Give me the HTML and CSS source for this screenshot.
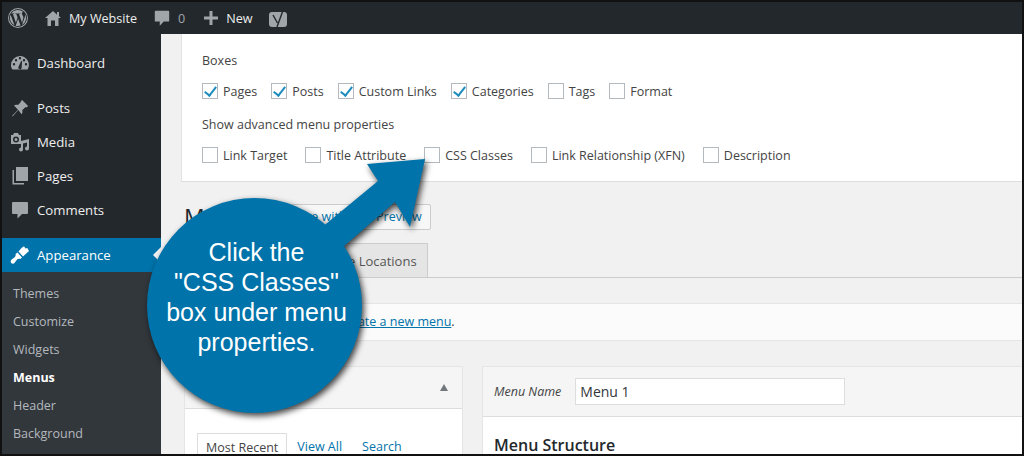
FILE: index.html
```html
<!DOCTYPE html>
<html lang="en">
<head>
<meta charset="utf-8">
<title>Menus</title>
<link rel="stylesheet" href="styles.css">
</head>
<body>
<div class="frame">
  <header class="adminbar">
    <svg class="ab-wp" viewBox="0 0 20 20"><path fill-rule="evenodd" d="M10 0a10 10 0 1 0 0 20 10 10 0 0 0 0-20zm0 1a9 9 0 1 1 0 18 9 9 0 0 1 0-18z"/><path d="M1.9 10c0 3.2 1.9 6 4.6 7.3L2.600 6.700A8 8 0 0 0 1.900 10zm13.500-.4c0-1-.4-1.700-.7-2.200-.4-.7-.8-1.200-.8-1.900 0-.7.6-1.400 1.400-1.400h.1A8.100 8.100 0 0 0 3.200 5.600h.5c.9 0 2.200-.1 2.200-.1.400 0 .5.600 0 .6 0 0-.4.100-.9.100l2.900 8.600L9.600 9.600 8.400 6.200c-.4 0-.8-.1-.8-.1-.4 0-.4-.7.100-.6 0 0 1.300.1 2.100.1.900 0 2.200-.1 2.200-.1.400 0 .5.600 0 .6 0 0-.4.100-.9.100l2.900 8.500.8-2.600c.3-1.100.6-1.900.6-2.500zM10.100 10.700l-2.400 7a8.100 8.100 0 0 0 5-.1l-.1-.1-2.500-6.800zm6.900-4.600c0 .3.100.6.100.9 0 .8-.2 1.700-.6 2.900l-2.500 7.100A8.100 8.100 0 0 0 17 6.100z"/></svg>
    <svg class="ab-home" viewBox="0 0 20 20"><path d="M16 8.500 10 3 2 10h2.500v8H8v-5.500h4V18h3.500v-8H18l-2-1.800V4h-2v2.700z"/></svg>
    <span class="ab-site">My Website</span>
    <svg class="ab-bubble" viewBox="0 0 20 20"><path d="M3 2h14a1 1 0 0 1 1 1v10a1 1 0 0 1-1 1h-5l-4.500 4.500V14H3a1 1 0 0 1-1-1V3a1 1 0 0 1 1-1z"/></svg>
    <span class="ab-count">0</span>
    <svg class="ab-plus" viewBox="0 0 14 14"><path d="M5.500 0h3v5.500H14v3H8.500V14h-3V8.500H0v-3h5.500z"/></svg>
    <span class="ab-new">New</span>
    <svg class="ab-yoast" viewBox="0 0 18 18"><rect x="0" y="3" width="18" height="15" rx="3"/><path class="ab-yoast-cut" d="M4 6l4.500 8M14.500 0 8 18"/></svg>
  </header>
  <div class="body">
    <nav class="sidebar">
      <ul class="menu">
        <li class="item gap-after"><svg class="mi" viewBox="0 0 20 20"><path fill-rule="evenodd" d="M10 3a9 9 0 0 0-9 9c0 1.800.5 3.300 1.400 4.600h15.200A9 9 0 0 0 10 3zM4 12.500a1.200 1.200 0 1 1 0-2.400 1.200 1.200 0 0 1 0 2.400zm2-4a1.200 1.200 0 1 1 0-2.400 1.200 1.200 0 0 1 0 2.400zM10 6.500a1.200 1.200 0 1 1 0-2.400 1.200 1.200 0 0 1 0 2.400zm1.600 8.700a1.700 1.700 0 0 1-3.200-1.100l2.800-6.100.9.100zM14 8.500a1.200 1.200 0 1 1 0-2.400 1.200 1.200 0 0 1 0 2.400zm2 4a1.200 1.200 0 1 1 0-2.400 1.200 1.200 0 0 1 0 2.400z"/></svg><span>Dashboard</span></li>
        <li class="item"><svg class="mi" viewBox="0 0 20 20"><path d="M10.400 3.400 12.100 2l6 6-1.500 1.500-1-.6-3.400 3.300c.5 1.500.3 3-.6 4L8.300 12 3 18l-1 .4.400-1L8 11.700 4 7.500c1-.9 2.500-1.100 4-.6l3.300-3.400z"/></svg><span>Posts</span></li>
        <li class="item"><svg class="mi" viewBox="0 0 20 20"><path fill-rule="evenodd" d="M1 3h2l1-2h4l1 2h2v9H1zm5 1.500A3 3 0 1 0 6 10.500a3 3 0 0 0 0-6zm0 1.500a1.500 1.500 0 1 1 0 3 1.500 1.500 0 0 1 0-3z"/><path d="M19 7v9.500a2 2 0 1 1-2-2v-4l-4 1v6a2 2 0 1 1-2-2v-6.500z"/></svg><span>Media</span></li>
        <li class="item"><svg class="mi" viewBox="0 0 20 20"><path d="M6 1h12v14H6z"/><path d="M4 4v13h10v1.500H2.500V4z"/></svg><span>Pages</span></li>
        <li class="item gap-after"><svg class="mi" viewBox="0 0 20 20"><path d="M3 2h14a1 1 0 0 1 1 1v10a1 1 0 0 1-1 1h-5l-4.500 4.500V14H3a1 1 0 0 1-1-1V3a1 1 0 0 1 1-1z"/></svg><span>Comments</span></li>
        <li class="item current"><svg class="mi" viewBox="0 0 20 20"><path d="M11.500 3 14 1.200l1.500 2.300L17.300 3l1.700 3-6 5.500-4.500-5zM7.500 7.500l4.500 5-1.700 1.500c-1.300-.6-2.500-.3-3.200.6L4.500 18c-.8.900-2.500.8-3.300-.1-.8-.9-.6-2.400.2-3.100l3.500-2.900c.8-.7 1-1.700.6-3z"/></svg><span>Appearance</span></li>
      </ul>
      <ul class="submenu">
        <li>Themes</li>
        <li>Customize</li>
        <li>Widgets</li>
        <li class="active">Menus</li>
        <li>Header</li>
        <li>Background</li>
      </ul>
    </nav>
    <main class="content">
      <section class="options">
        <p class="legend">Boxes</p>
        <div class="checks">
          <label class="check"><i class="box on"></i>Pages</label>
          <label class="check"><i class="box on"></i>Posts</label>
          <label class="check"><i class="box on"></i>Custom Links</label>
          <label class="check"><i class="box on"></i>Categories</label>
          <label class="check"><i class="box"></i>Tags</label>
          <label class="check"><i class="box"></i>Format</label>
        </div>
        <p class="legend strong">Show advanced menu properties</p>
        <div class="checks wide">
          <label class="check"><i class="box"></i>Link Target</label>
          <label class="check"><i class="box"></i>Title Attribute</label>
          <label class="check"><i class="box"></i>CSS Classes</label>
          <label class="check"><i class="box"></i>Link Relationship (XFN)</label>
          <label class="check"><i class="box"></i>Description</label>
        </div>
      </section>
      <div class="wrap">
        <div class="heading">
          <h1>Menus</h1>
          <a class="button">Manage with Live Preview</a>
        </div>
        <div class="tabs">
          <a class="tab">Edit Menus</a>
          <a class="tab second">Manage Locations</a>
        </div>
        <div class="notice">Edit your menu below, or <a>create a new menu</a>.</div>
        <div class="columns">
          <section class="left">
            <div class="left-head"><span>Pages</span><i class="caret"></i></div>
            <div class="left-body">
              <span class="subtab on">Most Recent</span>
              <span class="subtab">View All</span>
              <span class="subtab">Search</span>
            </div>
          </section>
          <section class="right">
            <div class="right-head"><em>Menu Name</em><span class="input">Menu 1</span></div>
            <div class="right-body"><h3>Menu Structure</h3></div>
          </section>
        </div>
      </div>
    </main>
  </div>
  <div class="callout">
    <svg class="callout-shape" viewBox="0 0 300 240" aria-hidden="true">
      <g class="shape">
        <circle cx="109.500" cy="132.500" r="107.500"/>
        <path d="M280 -14 L222 -9 L233 8 L170 60 L198 74 L250 29 L265 54z"/>
      </g>
    </svg>
    <p class="callout-text">Click the<br>"CSS Classes"<br>box under menu<br>properties.</p>
  </div>
</div>
</body>
</html>
```
FILE: styles.css
```css
* { box-sizing: border-box; }
html, body { margin: 0; padding: 0; }
body { width: 1024px; height: 456px; overflow: hidden; font-family: "Open Sans", "Liberation Sans", sans-serif; font-size: 12.500px; color: #444; background: #000; }
ul { list-style: none; margin: 0; padding: 0; }
p, h1, h3 { margin: 0; }
.frame { position: relative; width: 1024px; height: 456px; border: 2px solid #111; display: flex; flex-direction: column; overflow: hidden; background: #f1f1f1; }
.adminbar { flex: none; height: 32px; background: #23282d; color: #eee; display: flex; align-items: center; font-size: 12.600px; }
.adminbar svg { fill: #a0a5aa; flex: none; }
.ab-wp { width: 20px; height: 20px; margin-left: 6px; }
.ab-home { width: 20px; height: 20px; margin-left: 15px; }
.ab-site { margin-left: 6px; }
.ab-bubble { width: 18px; height: 18px; margin-left: 16px; }
.ab-count { margin-left: 7px; color: #a0a5aa; }
.ab-plus { width: 14px; height: 14px; margin-left: 19px; }
.ab-new { margin-left: 8px; }
.ab-yoast { width: 18px; height: 18px; margin-left: 16px; }
.ab-yoast-cut { fill: none; stroke: #23282d; stroke-width: 1.400; }
.body { flex: 1; display: flex; min-height: 0; }
.sidebar { flex: none; width: 159px; background: #23282d; padding-top: 12px; }
.item { height: 34px; display: flex; align-items: center; padding-left: 8px; font-size: 13.200px; color: #eee; }
.item span { margin-top: -1px; }
.item .mi { width: 20px; height: 20px; fill: #a0a5aa; margin-right: 7px; flex: none; }
.gap-after { margin-bottom: 11px; }
.current { position: relative; background: #0073aa; color: #fff; }
.current .mi { fill: #fff; }
.current::after { content: ""; position: absolute; right: 0; top: 9px; border: 8px solid transparent; border-right-color: #f1f1f1; }
.submenu { background: #32373c; padding: 8px 0 6px; font-size: 12.500px; color: #b4b9be; }
.submenu li { height: 28px; line-height: 28px; padding-left: 11px; }
.submenu .active { color: #fff; font-weight: 700; }
.content { flex: 1; min-width: 0; overflow: hidden; }
.options { margin-left: 20px; height: 148px; background: #fff; border-left: 1px solid #e2e2e2; border-bottom: 1px solid #ddd; padding-left: 20px; }
.legend { line-height: 20px; padding-top: 17px; height: 36px; }
.legend.strong { font-weight: 500; height: 20px; padding: 0; margin-top: 16px; line-height: 20px; }
.checks { display: flex; margin-top: 13px; height: 16px; gap: 14px; }
.checks.wide { gap: 18px; margin-top: 12px; }
.check { display: flex; align-items: flex-start; gap: 5px; line-height: 18px; }
.box { position: relative; width: 16px; height: 16px; background: #fff; border: 1px solid #b4b9be; flex: none; }
.box.on::after { content: ""; position: absolute; left: 4px; top: 0; width: 5px; height: 10px; border: solid #1e8cbe; border-width: 0 2.500px 2.500px 0; transform: rotate(38deg); }
.wrap { padding: 0 0 0 23px; }
.heading { display: flex; align-items: center; height: 26px; margin-top: 22px; }
h1 { font-size: 23px; font-weight: 400; color: #23282d; }
.button { margin-left: 4px; height: 26px; width: 170px; padding: 0 8px; line-height: 24px; background: #f7f7f7; border: 1px solid #ccc; border-radius: 2px; color: #0073aa; white-space: nowrap; text-align: right; }
.tabs { display: flex; height: 35px; margin-top: 13px; border-bottom: 1px solid #ccc; gap: 4px; }
.tab { height: 35px; line-height: 34px; padding: 0 10px; background: #e5e5e5; border: 1px solid #ccc; color: #555; font-size: 13px; font-weight: 500; white-space: nowrap; }
.tab.second { width: 150px; text-align: right; }
.notice { margin: 25px 0 0 -2px; height: 38px; background: #fbfbfb; border-top: 1px solid #e5e5e5; border-bottom: 1px solid #e5e5e5; line-height: 36px; padding-left: 8px; }
.notice a { color: #0073aa; text-decoration: underline; }
.columns { display: flex; margin-top: 25px; }
.left { width: 279px; height: 120px; background: #fff; border: 1px solid #e5e5e5; flex: none; }
.left-head { height: 42px; background: #f5f5f5; border-bottom: 1px solid #ddd; display: flex; justify-content: space-between; align-items: center; padding: 0 14px 0 12px; font-weight: 600; }
.caret { border: 4px solid transparent; border-bottom: 7px solid #72777c; border-top: 0; }
.left-body { padding: 24px 0 0 12px; display: flex; align-items: flex-start; }
.subtab { padding: 0 10px; height: 30px; line-height: 28px; color: #0073aa; }
.subtab.on { border: 1px solid #ddd; color: #444; padding: 0 8px; }
.right { margin-left: 19px; flex: 1; height: 120px; background: #fff; border: 1px solid #e5e5e5; border-right: 0; }
.right-head { height: 50px; background: #f5f5f5; border-bottom: 1px solid #ddd; display: flex; align-items: center; padding-left: 11px; }
.right-head em { margin-right: 14px; }
.input { width: 270px; height: 27px; line-height: 25px; padding-left: 4px; background: #fff; border: 1px solid #ddd; font-size: 14px; color: #32373c; }
.right-body { padding: 17px 0 0 11px; }
h3 { font-size: 16px; font-weight: 600; color: #23282d; }
.callout { position: absolute; left: 143px; top: 171px; width: 300px; height: 240px; pointer-events: none; }
.callout-shape { position: absolute; inset: 0; width: 300px; height: 240px; overflow: visible; }
.shape { fill: #0073aa; filter: drop-shadow(2px 3px 3px rgba(0,0,0,.75)); }
.callout-text { position: absolute; left: 21px; top: 64px; width: 181px; text-align: center; color: #fff; font: 25px/30px "Liberation Sans", Arial, sans-serif; white-space: nowrap; }
```
